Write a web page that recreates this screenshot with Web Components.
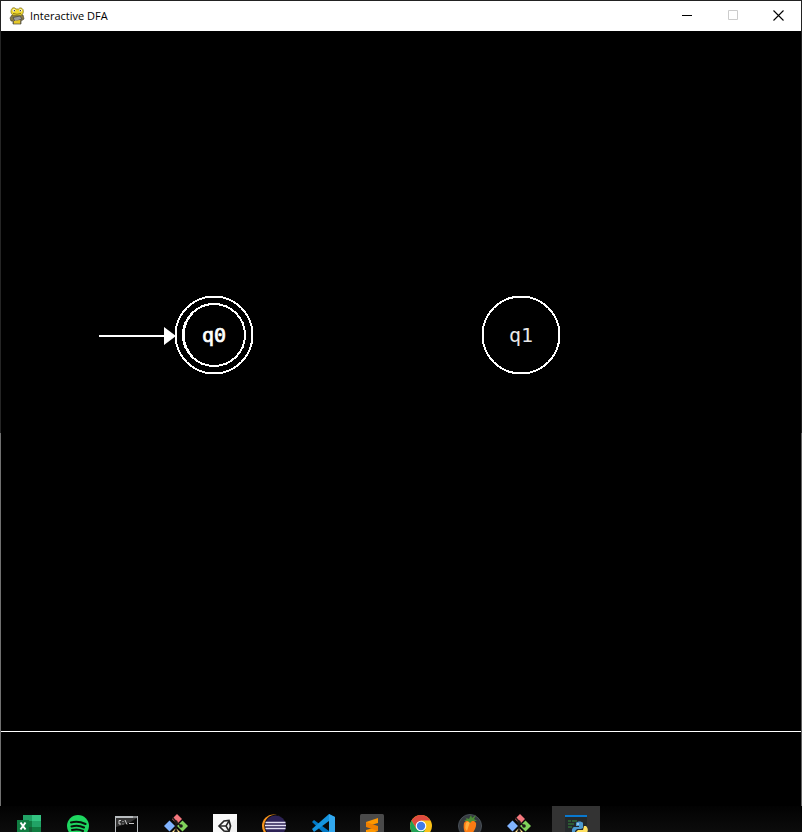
<!DOCTYPE html>
<html lang="en">
<head>
<meta charset="utf-8">
<title>Interactive DFA</title>
<style>
html,body{margin:0;height:100%;background:#000;overflow:hidden}
body{font-family:"Open Sans","Noto Sans",sans-serif}
</style>
</head>
<body>
<desktop-screen></desktop-screen>
<script>
const define = (name, html) => {
  const t = document.createElement('template');
  t.innerHTML = html;
  customElements.define(name, class extends HTMLElement {
    constructor() {
      super();
      this.attachShadow({mode: 'open'}).append(t.content.cloneNode(true));
    }
  });
};

define('window-controls', `
<style>
:host{display:flex;height:28px;align-self:start}
button{width:46px;height:100%;padding:0;border:0;background:none;display:grid;place-items:center;color:#000}
button:disabled{color:#ccc}
button:last-child{width:45px}
svg{width:11px;height:11px;fill:none;stroke:currentColor}
</style>
<button aria-label="Minimize"><svg viewBox="0 0 11 11"><path d="M0 5.5H10"/></svg></button>
<button aria-label="Maximize" disabled><svg viewBox="0 0 11 11"><path d="M.5.5H9.5V9.5H.5Z"/></svg></button>
<button aria-label="Close"><svg viewBox="0 0 11 11"><path d="M.5.5L10.5 10.5M10.5.5L.5 10.5" stroke-width="1.1"/></svg></button>`);

define('title-bar', `
<style>
:host{display:flex;align-items:center;height:30px;background:#fff;color:#000}
svg{width:16px;height:18px;margin:0 5px 0 8px}
h1{margin:0;font-size:11px;line-height:16px;font-weight:400;flex:1;white-space:nowrap}
</style>
<svg viewBox="0 0 16 18">
<path d="M3 8L1 11 2 14 4 14 4 17H12V14L15 12 14 8 11 7Z" fill="#8a7b45" stroke="#4c4838" stroke-width=".7"/>
<path d="M3 1.5C4 .3 6 .5 7 2H9.500C10.500.3 13 .6 14 2.500 15 5 14 8 11 8.500H5C2 8 1 4 3 1.500Z" fill="#f0d92e" stroke="#7a6b1c" stroke-width=".7"/>
<circle cx="5" cy="3.500" r="1.300" fill="#fff"/><circle cx="11.500" cy="3.500" r="1.300" fill="#fff"/>
<circle cx="5.300" cy="3.700" r=".6"/><circle cx="11.300" cy="3.700" r=".6"/>
<path d="M4 6.500Q8 8 12 6.500" stroke="#6b5b15" fill="none" stroke-width=".8"/>
<path d="M4 10.500L11 9 13 12 6 14.500Z" fill="#9a9a9a" stroke="#444" stroke-width=".7"/>
<path d="M5 14L11 13V16.500H5Z" fill="#e6c928"/>
</svg>
<h1><slot></slot></h1>
<window-controls></window-controls>`);

define('dfa-state', `
<style>
:host{position:absolute;box-sizing:border-box;width:80px;height:80px;margin:-40px 0 0 -40px;display:grid;place-items:center;color:#e8e8e8;font:20px/24px "DejaVu Sans Mono","Liberation Mono",monospace}
svg,span{grid-area:1/1}
svg{width:80px;height:80px;fill:none;stroke:#fff;stroke-width:2}
.inner{display:none}
:host([accepting]) .inner{display:inline}
:host([accepting]){color:#fff;-webkit-text-stroke:.7px #fff}
</style>
<svg viewBox="0 0 80 80" shape-rendering="crispEdges"><circle cx="40" cy="40" r="38.500"/><g class="inner"><circle cx="40" cy="40" r="31"/><path d="M18.500 18.500A30.500 30.500 0 0 0 18.500 61.500"/></g></svg>
<span><slot></slot></span>`);

define('start-arrow', `
<style>
:host{position:absolute;width:77px;height:18px}
svg{display:block;width:100%;height:100%;fill:#fff}
</style>
<svg viewBox="0 0 77 18"><path d="M0 8H65V0L77 9 65 18V10H0Z"/></svg>`);

define('dfa-canvas', `
<style>
:host{display:grid;grid-template-rows:1fr 74px;background:#000;min-height:0}
.graph{position:relative;border-bottom:1px solid #fff}
#q0{left:213px;top:304px}#q1{left:520px;top:304px}
start-arrow{left:98px;top:296px}
</style>
<div class="graph"><start-arrow></start-arrow><dfa-state id="q0" accepting>q0</dfa-state><dfa-state id="q1">q1</dfa-state></div>
<div></div>`);

define('app-window', `
<style>
:host{display:grid;grid-template-rows:30px 1fr;min-height:0;position:relative;padding:1px 1px 0;background:#222}
.client{min-height:0;display:grid}
:host::before,:host::after{content:"";position:absolute;top:31px;bottom:0;width:1px}
:host::before{left:0;background:linear-gradient(#252525 402px,#707070 402px)}
:host::after{right:0;background:linear-gradient(#222 402px,#606060 402px)}
</style>
<title-bar>Interactive DFA</title-bar>
<div class="client"><dfa-canvas></dfa-canvas></div>`);

const git = `<path d="M13 0L18 5 13 10 8 5Z" fill="#f4777d"/><path d="M5.500 6.500L11 12 5.500 17.500 0 12Z" fill="#80b3ff"/><path d="M18.500 6.500L24 12 18.500 17.500 13 12Z" fill="#80d35b"/><path d="M12 14L17 19 12 24 7 19Z" fill="#ffe08a"/><path d="M8.500 3.500L12 7.500V18M12 8L17 12" stroke="#1d1a18" stroke-width="1.600" fill="none"/><circle cx="12" cy="8" r="1.700" fill="#1d1a18"/><circle cx="17" cy="12" r="1.800" fill="#1d1a18"/><circle cx="12" cy="17.500" r="1.800" fill="#1d1a18"/>`;
const icons = {
excel:`<path d="M6 1H15V7H6Z" fill="#21a366"/><path d="M15 1H24V7H15Z" fill="#33c481"/><path d="M6 7H15V13H6Z" fill="#107c41"/><path d="M15 7H24V13H15Z" fill="#21a366"/><path d="M6 13H24V24H6Z" fill="#185c37"/><path d="M15 13H24V18H15Z" fill="#107c41"/><path d="M0 6H12V18H0Z" fill="#107c41"/><path d="M3.500 8.500L8.500 15.500M8.500 8.500L3.500 15.500" stroke="#fff" stroke-width="2"/>`,
spotify:`<circle cx="12" cy="12" r="11" fill="#1ed760"/><path d="M5 8.500Q12 6.300 19.500 10M5.500 12.500Q12 10.500 18 13.500M6 16Q12 14.500 17 17" fill="none" stroke="#07150b" stroke-width="2" stroke-linecap="round"/>`,
terminal:`<path d="M0 2H23V21H0Z" fill="#b9bdc0"/><path d="M1 4H22V20H1Z" fill="#080808"/><path d="M1 4H22L14 9 1 13Z" fill="#343434"/><path d="M6 6.500H4V10H6M8 7V8M8 9.500V10.500M10 6L12 10.500M14 9.500H19" stroke="#ddd" stroke-width=".9" fill="none"/><path d="M18 3H22" stroke="#555"/>`,
git,
unity:`<path d="M0 0H24V24H0Z" fill="#f1f1f1"/><path d="M0 0H24V4L0 24Z" fill="#fff" opacity=".6"/><path d="M6 12L11 7 16 6.500 17.500 12 16 17.500 11 17Z" fill="none" stroke="#252525" stroke-width="1.700"/><path d="M6 12H13L16 7M13 12L16 17" stroke="#252525" stroke-width="1.500" fill="none"/>`,
eclipse:`<circle cx="11.500" cy="12" r="11.500" fill="#f7941e"/><circle cx="13.500" cy="12" r="11.200" fill="#0a0a0a"/><circle cx="13.500" cy="12" r="10.500" fill="#2c2255"/><path d="M3.500 8.500H23.500M3 11.500H24M3.500 14.500H23.500" stroke="#e4e0f2" stroke-width="1.500"/>`,
vscode:`<path d="M18 0L24 3V21L18 24 1 8 3 6 18 17Z" fill="#0078c5"/><path d="M18 0L1 15 3 18 18 7Z" fill="#1494df"/><path d="M18 0L24 3V21L18 24Z" fill="#32a8ef"/>`,
sublime:`<rect width="24" height="24" rx="1.500" fill="#4a4a4a"/><path d="M6 8L18 4V9L11 11 18 13V17L6 21V16L13 14 6 12Z" fill="#ff9800"/><path d="M6 8L18 12V17L6 13Z" fill="#f08000"/>`,
chrome:`<circle cx="12" cy="12" r="11" fill="#fbc116"/><path d="M2.500 6.500A11 11 0 0 1 21.500 6.500H12L7.500 15Z" fill="#df4a3f"/><path d="M2.500 6.500A11 11 0 0 0 12 23L16.500 15H7.500Z" fill="#20a055"/><circle cx="12" cy="12" r="5.300" fill="#fff"/><circle cx="12" cy="12" r="4.200" fill="#427be8"/>`,
fruit:`<circle cx="12" cy="12" r="11.500" fill="#353a40" stroke="#4a5158"/><path d="M6 9C8 5 16 5 18 9 19 14 14 21 11 22 6 20 5 14 6 9Z" fill="#fa7b13"/><path d="M8 9Q9 7 12 8L9 17Q6 14 8 9Z" fill="#ffae3d"/><path d="M7 3.500L11 5 13 1 14 4 18 1 16 5 19 7 14 7 12 9 10 7 6 7 9 5Z" fill="#4c8d35"/>`,
git2:git,
python:`<path d="M1 1H23V24H1Z" fill="#24292b"/><path d="M1 1H23V3H1Z" fill="#0878cf"/><path d="M4 7H7M8 7H13M4 10H10M4 13H8" stroke="#316b37" stroke-width="1.500"/><path d="M12 9C13 7 18 7 19 9V14L17 15H13L11 17V20H9C7 17 8 14 10 13H15V12H12Z" fill="#4c9ad1"/><path d="M20 12H22C25 15 24 19 21 20H16V21H19V23H12V18L14 16H19Z" fill="#ffe160"/><circle cx="14" cy="10" r=".8" fill="#fff"/>`
};
customElements.define('app-icon', class extends HTMLElement {
  connectedCallback() {
    const root = this.attachShadow({mode: 'open'});
    root.innerHTML = `<style>
:host{display:block;flex:0 0 48px;height:40px}
:host([active]){margin-left:8px;background:#333}
button{width:100%;height:100%;padding:0;border:0;background:none;display:grid;place-items:center}
svg{width:24px;height:24px}
</style><button aria-label="${this.getAttribute('name')}"><svg viewBox="0 0 24 24">${icons[this.getAttribute('name')]}</svg></button>`;
  }
});

define('task-bar', `
<style>
:host{display:flex;gap:1px;padding-left:5px;height:26px;overflow:hidden;box-sizing:border-box;background:linear-gradient(#020202,#0c0c0c)}
</style>
${Object.keys(icons).map(n => `<app-icon name="${n}"${n === 'python' ? ' active' : ''}></app-icon>`).join('')}`);

define('desktop-screen', `
<style>:host{display:grid;grid-template-rows:1fr 26px;height:100vh;min-width:0}</style>
<app-window></app-window><task-bar></task-bar>`);
</script>
</body>
</html>
